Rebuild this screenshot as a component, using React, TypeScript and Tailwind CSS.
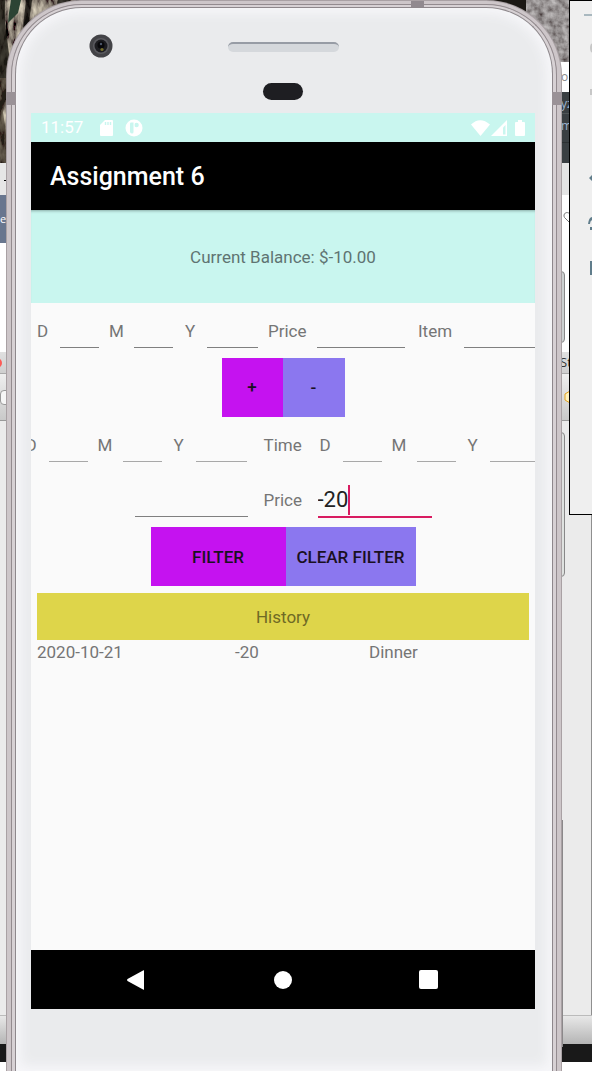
import type { ReactNode } from 'react';

const fieldBase =
  'block h-[45px] shrink-0 appearance-none rounded-none border-0 border-b bg-transparent p-0 text-[22px] text-[#222] outline-none';

function Field({ label, width, line = 'border-[#7f7f7f]' }: { label: string; width: string; line?: string }) {
  return <input type="text" aria-label={label} className={`${fieldBase} ${width} ${line}`} />;
}

function Tag({ className, children }: { className: string; children: ReactNode }) {
  return <span className={`shrink-0 leading-[56px] ${className}`}>{children}</span>;
}

function DateFields({ name, line }: { name: string; line?: string }) {
  return (
    <>
      <Tag className="w-[23px]">D</Tag>
      <Field label={`${name} day`} width="w-[39px]" line={line} />
      <Tag className="w-[35px] pl-[10px]">M</Tag>
      <Field label={`${name} month`} width="w-[39px]" line={line} />
      <Tag className="w-[34px] pl-[12px]">Y</Tag>
      <Field label={`${name} year`} width="w-[51px]" line={line} />
    </>
  );
}

function Photo() {
  return (
    <svg className="absolute inset-x-0 top-0 h-[163px] w-full" aria-hidden="true">
      <defs>
        <filter id="bark" x="0" y="0" width="100%" height="100%">
          <feTurbulence type="fractalNoise" baseFrequency="0.12 0.05" numOctaves="4" seed="6" />
          <feColorMatrix values="1.5 0 0 0 -0.56  1.4 0 0 0 -0.54  1.1 0 0 0 -0.42  0 0 0 0 1" />
        </filter>
        <filter id="stone" x="0" y="0" width="100%" height="100%">
          <feTurbulence type="fractalNoise" baseFrequency="0.16" numOctaves="3" seed="3" />
          <feColorMatrix values="0.6 0 0 0 0.01  0.6 0 0 0 -0.01  0.6 0 0 0 -0.01  0 0 0 0 1" />
        </filter>
      </defs>
      <rect width="100%" height="163" fill="#1b1814" />
      <rect width="100" height="163" filter="url(#bark)" />
      <path d="M11 0h10l-3 13-10 10 1-10z" fill="#2c4434" />
      <path d="M0 0h5v24l4 30v24H0z" fill="#211f18" opacity="0.8" />
      <path d="M26 0h6l-4 30-6 6zM58 0h12v10H56z" fill="#14130f" opacity="0.8" />
      <path d="M0 78h6v20l-3 14 3 20v31H0z" fill="#3a3224" opacity="0.6" />
      <rect x="526" width="66" height="62" filter="url(#stone)" />
    </svg>
  );
}

function WindowStack({ side }: { side: 'left' | 'right' }) {
  const left = side === 'left';
  return (
    <div className={`flex flex-col overflow-hidden font-['Open_Sans',sans-serif] ${left ? 'w-4' : 'w-10'}`}>
      {left ? (
        <>
          <div className="h-[163px] shrink-0" />
          <div className="h-8 shrink-0 bg-[#e6e6e6] pt-[17px] pl-1">
            <div className="h-px w-3 bg-black" />
          </div>
          <div className="h-12 shrink-0 bg-[#68768e] text-[11px] leading-[48px] text-white">e</div>
          <div className="h-[109px] shrink-0 bg-white" />
        </>
      ) : (
        <>
          <div className="h-[62px] shrink-0" />
          <div className="h-[30px] shrink-0 bg-white pl-1 text-[12px] leading-[30px] text-[#8a8a8a]">ro</div>
          <div className="h-[71px] shrink-0 bg-[#3a3f42] pl-[9px] text-[12px] leading-[24px] text-[#9db4d0]">
            <div className="h-[22px] border-b border-[#505557]">yz</div>
            <div className="h-[29px] border-b border-[#2c3032]">m</div>
          </div>
          <div className="h-8 shrink-0 bg-[#e4e4e4]" />
          <div className="h-[157px] shrink-0 bg-white pt-[16px] pl-[11px]">
            <svg width="14" height="14" viewBox="0 0 14 14" fill="none" stroke="#777" aria-hidden="true">
              <path d="M7 12 1.5 6.500C-.5 3 3.500-.500 7 3c3.500-3.500 7.500 0 5.500 3.500Z" />
            </svg>
          </div>
        </>
      )}
      <div className="flex h-[22px] shrink-0 items-center border-b border-[#aaa] bg-linear-to-b from-[#e0e0e0] to-[#cfcfcf]">
        {left ? (
          <span className="-ml-2 size-[10px] rounded-full bg-[#fc5b57]" />
        ) : (
          <span className="pl-2 text-[13px] text-[#333]">St</span>
        )}
      </div>
      <div className="flex h-[47px] shrink-0 items-center border-b border-[#999] bg-linear-to-b from-[#efefef] to-[#c9c9c9]">
        {left ? (
          <span className="h-[15px] w-5 rounded border border-[#999] bg-[#f6f6f6]" />
        ) : (
          <svg className="ml-3" width="14" height="14" viewBox="0 0 14 14" aria-hidden="true">
            <path d="m6 1 5 3v6l-5 3-5-3V4z" fill="#fff2bd" stroke="#e3a421" />
          </svg>
        )}
      </div>
      <div className="h-[594px] shrink-0 border-r border-[#8f8f8f] bg-[#ebebeb]" />
      <div className="h-[29px] shrink-0 border-t border-[#bbb] bg-linear-to-b from-[#e8e8e8] to-[#b5b5b5]" />
      <div className="h-[18px] shrink-0 bg-[#191919]" />
      <div className="grow bg-white" />
    </div>
  );
}

function EmulatorToolbar() {
  return (
    <div className="absolute top-0 right-0 h-[515px] w-[23px] border border-r-0 border-black bg-[#efefef]">
      <svg className="ml-auto h-[300px] w-[10px]" viewBox="0 0 10 300" aria-hidden="true">
        <path d="M2 14h8" stroke="#a9b8bf" strokeWidth="2" />
        <path d="M10 43q-2 4 0 8M9 88v6" stroke="#c7c7c7" strokeWidth="2" fill="none" />
        <path d="m7 177 3-3v6zM6 223q1-7 4-7v3q-2 1-2 4zM8 226h2v3H8zM8 260h2v14H8z" fill="#607d8b" />
      </svg>
    </div>
  );
}

function StatusBar() {
  return (
    <div className="flex h-[29px] shrink-0 items-center bg-[#c9f6ef] pr-[9px] pl-[10px] text-[17px] text-white">
      <span className="w-[59px]">11:57</span>
      <svg width="14" height="16" viewBox="0 0 14 16" aria-hidden="true">
        <path d="M5 0h7a1 1 0 0 1 1 1v14a1 1 0 0 1-1 1H1a1 1 0 0 1-1-1V5z" fill="#fff" />
        <path d="M5.500 2v3M8 2v3M10.500 2v3" stroke="#c9f6ef" strokeWidth="1.400" />
      </svg>
      <svg className="ml-[11px]" width="18" height="18" viewBox="0 0 18 18" aria-hidden="true">
        <circle cx="9" cy="9" r="8.500" fill="#fff" />
        <path d="M5 4.500q0-1 1-1h3v9.500q-.5 1.500-2 1.500t-2-1.500z" fill="#c9f6ef" />
        <circle cx="11.500" cy="6" r="2.300" fill="#c9f6ef" />
        <path d="M9 3v11" stroke="#fff" />
      </svg>
      <svg className="ml-auto" width="56" height="18" viewBox="0 0 56 18" aria-hidden="true">
        <path d="M1 5.500Q10-3 20 5.500L10.500 17z" fill="#fff" />
        <path d="M21 17 37 1v16z" fill="#fff" />
        <path d="M33 8.500 35.500 6v9.500H33z" fill="#c9f6ef" />
        <path d="M48 1h4v2h2q1 0 1 1v12q0 1-1 1h-8q-1 0-1-1V4q0-1 1-1h2z" fill="#fff" />
      </svg>
    </div>
  );
}

const history = [{ date: '2020-10-21', price: '-20', item: 'Dinner' }];

function Screen() {
  return (
    <main className="flex h-[896px] flex-col overflow-hidden bg-[#fafafa] font-[Roboto,sans-serif] text-[17px] text-[#757575]">
      <StatusBar />
      <h1 className="h-[68px] shrink-0 bg-black pl-[19px] text-[25px] leading-[70px] font-medium text-white">
        Assignment 6
      </h1>
      <p className="h-[93px] shrink-0 bg-[#c9f6ef] text-center leading-[94px] text-[#5f7472] shadow-[inset_0_3px_3px_-2px_#88aaa6]">
        Current Balance: $-10.00
      </p>

      <div className="flex h-[55px] shrink-0 overflow-hidden pl-[6px]">
        <DateFields name="Entry" />
        <Tag className="w-[59px] pl-[10px]">Price</Tag>
        <Field label="Price" width="w-[88px]" />
        <Tag className="w-[59px] pl-[13px]">Item</Tag>
        <Field label="Item" width="w-[88px]" />
      </div>
      <div className="flex h-[59px] shrink-0 justify-center font-medium text-[#1a1022]">
        <button className="w-[61px] bg-[#c512f0]">+</button>
        <button className="w-[62px] bg-[#8b77ef]">-</button>
      </div>

      <div className="flex h-[55px] shrink-0 justify-center overflow-hidden">
        <DateFields name="From" line="border-[#a8a8a8]" />
        <Tag className="w-[73px] pl-[17px]">Time</Tag>
        <DateFields name="To" line="border-[#a8a8a8]" />
      </div>
      <div className="flex h-[55px] shrink-0 justify-center">
        <Field label="Minimum price" width="w-[113px]" />
        <Tag className="w-[70px] pl-[16px]">Price</Tag>
        <label className="flex h-[46px] w-[114px] items-center border-b-2 border-[#d81b60] pt-3">
          <input
            type="text"
            aria-label="Maximum price"
            defaultValue="-20"
            size={3}
            className="field-sizing-content appearance-none border-0 bg-transparent p-0 text-[22px] leading-[30px] text-[#222] outline-none"
          />
          <span className="h-[30px] w-[2px] bg-[#d81b60]" />
        </label>
      </div>
      <div className="flex h-[59px] shrink-0 justify-center font-medium text-[#1a1022]">
        <button className="w-[135px] bg-[#c512f0] pt-[3px]">FILTER</button>
        <button className="w-[130px] bg-[#8b77ef] pt-[3px] whitespace-nowrap">CLEAR FILTER</button>
      </div>

      <div className="mt-[7px] px-[6px]">
        <h2 className="h-[47px] bg-[#ded54a] text-center leading-[49px] text-[#6f6a25]">History</h2>
        <table className="w-full table-fixed text-left leading-[24px]">
          <tbody>
            {history.map((row) => (
              <tr key={row.date}>
                <td className="w-[198px] p-0">{row.date}</td>
                <td className="w-[134px] p-0">{row.price}</td>
                <td className="p-0">{row.item}</td>
              </tr>
            ))}
          </tbody>
        </table>
      </div>

      <nav className="mt-auto flex h-[59px] shrink-0 items-center justify-between bg-black px-[95px]">
        <button aria-label="Back">
          <svg width="20" height="22" viewBox="0 0 20 22" aria-hidden="true">
            <path d="M18 1.500v19Q18 21 17.500 20.700L1.500 12Q.5 11 1.500 10L17.500 1.200Q18 1 18 1.500z" fill="#fff" />
          </svg>
        </button>
        <button aria-label="Home" className="size-[18px] rounded-full bg-white" />
        <button aria-label="Recent apps" className="mr-[2px] size-[19px] rounded-[2px] bg-white" />
      </nav>
    </main>
  );
}

export default function App() {
  return (
    <div className="relative isolate min-h-screen overflow-hidden bg-white">
      <div className="absolute inset-0 -z-10 flex justify-between" aria-hidden="true">
        <Photo />
        <div className="relative flex">
          <WindowStack side="left" />
        </div>
        <div className="relative flex">
          <WindowStack side="right" />
          <div className="absolute top-[271px] left-0 h-[72px] w-[13px] rounded-r border border-[#888] bg-[#ccd0d0]" />
          <div className="absolute top-[432px] left-0 h-[145px] w-[13px] rounded-r border border-[#888] bg-[#dfe2e0]" />
          <div className="absolute top-[820px] left-0 h-[227px] w-[11px] bg-[#8b888a]" />
        </div>
      </div>

      <div className="relative mr-[30px] ml-[6px] rounded-t-[76px] bg-[#a9a1a4] px-px pt-px">
        <div className="rounded-t-[75px] border-x-4 border-t-3 border-[#cdc6c9]">
          <div className="rounded-t-[71px] border-x border-t border-[#938b8f] bg-[#d7d1d4] px-[3px] pt-[2px]">
            <div className="rounded-t-[67px] border-x border-t border-[#8e888c] bg-[#eaebed] pr-[17px] pb-[62px] pl-[15px] shadow-[inset_0_0_12px_5px_#f7f7fa]">
              <header className="relative h-[105px]">
                <svg className="absolute top-[26px] left-[58px]" width="24" height="24" viewBox="0 0 24 24" aria-hidden="true">
                  <circle cx="12" cy="12" r="11.500" fill="#434347" />
                  <circle cx="12" cy="12" r="8" fill="#5b5b60" />
                  <circle cx="12" cy="12" r="6.500" fill="#1c1c20" />
                  <circle cx="12" cy="11" r="3.500" fill="#08080b" />
                  <circle cx="13" cy="15.500" r="1.600" fill="#77702c" />
                  <circle cx="12" cy="10" r="1.200" fill="#4c5568" />
                </svg>
                <div className="mx-auto flex flex-col items-center pt-[34px]">
                  <div className="h-[10px] w-[111px] rounded-full border-t-2 border-[#979ca5] bg-[#d5d8dc]" />
                  <div className="mt-[31px] h-[17px] w-[40px] rounded-full bg-[#1e1e22]" />
                </div>
              </header>
              <Screen />
            </div>
          </div>
        </div>
        <div className="absolute top-[92px] left-0 h-[13px] w-[10px] bg-[#9a9297]" />
        <div className="absolute top-[92px] right-0 h-[13px] w-[10px] bg-[#9a9297]" />
        <div className="absolute top-px left-[405px] h-[6px] w-[13px] bg-[#918a8f]" />
      </div>

      <EmulatorToolbar />
    </div>
  );
}
